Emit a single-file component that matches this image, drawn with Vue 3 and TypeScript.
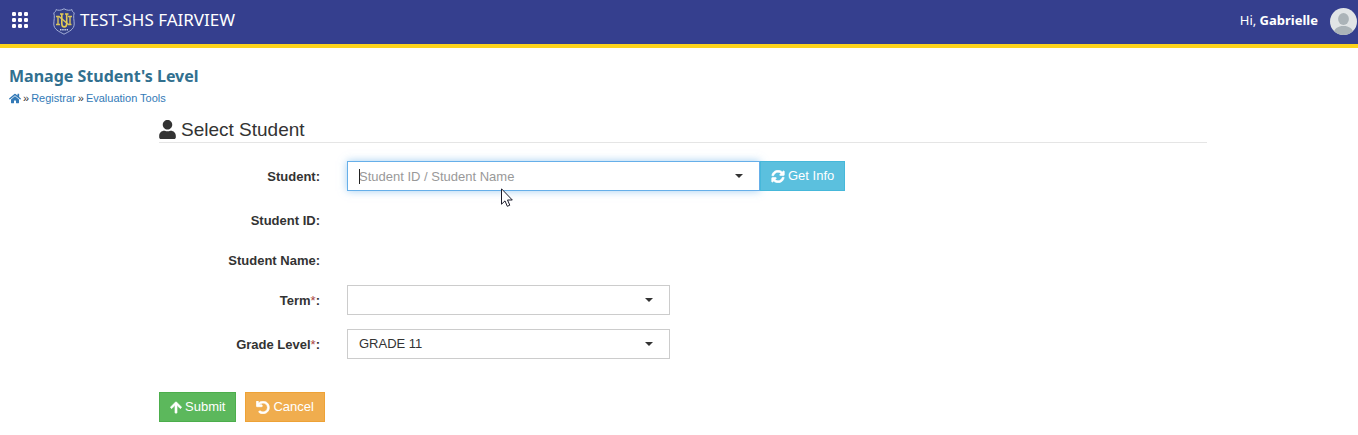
<script setup lang="ts">
import { ref } from 'vue'

const student = ref('')
const term = ref('')
const gradeLevel = ref('11')
const dots = [0, 1, 2, 3, 4, 5, 6, 7, 8]
</script>

<template>
  <div class="page">
    <header class="topbar">
      <button type="button" class="menu" aria-label="Applications">
        <svg width="16" height="16" viewBox="0 0 16 16">
          <rect v-for="d in dots" :key="d" :x="(d % 3) * 6" :y="Math.floor(d / 3) * 6" width="4" height="4" rx="1.2" fill="#fff" />
        </svg>
      </button>
      <a href="#" class="brand">
        <svg class="crest" width="22" height="27" viewBox="0 0 22 27" fill="none">
          <path d="M11 .8C8 2.6 5 2.6 3 1.6C3 3.4 2 4.2 .8 4.8C2 9 .8 12 .8 16C.8 21.5 6 23.500 11 26.200C16 23.500 21.200 21.500 21.200 16C21.200 12 20 9 21.200 4.800C20 4.200 19 3.400 19 1.600C17 2.600 14 2.600 11 .8Z" fill="#333f87" stroke="#a5afd8" />
          <path d="M3 8.500H6L15.500 16.500H18.500M5 8.500V16.500M3 16.500H7M17 8.500V16.500M15 8.500H19" stroke="#d9c35b" stroke-width="1.400" />
          <path d="M7 6H10.500M8.800 6V15.500C8.800 20 13.700 20 13.700 15.500V6M12 6H15.500" stroke="#e3ca55" stroke-width="1.600" />
          <path d="M7 21.800H15" stroke="#c3c9e3" stroke-width="1.600" stroke-dasharray="1.500 .7" />
        </svg>
        <span>TEST-SHS FAIRVIEW</span>
      </a>
      <div class="account">
        <span>Hi, <strong>Gabrielle</strong></span>
        <svg width="27" height="27" viewBox="0 0 27 27" role="img" aria-label="Profile">
          <defs><clipPath id="avatar-clip"><circle cx="13.500" cy="13.500" r="13.500" /></clipPath></defs>
          <g clip-path="url(#avatar-clip)">
            <rect width="27" height="27" fill="#e1e4e6" />
            <ellipse cx="13.500" cy="11" rx="5.400" ry="6" fill="#abb3b8" />
            <path d="M3.500 27C3.500 20.500 8 18 13.500 18S23.500 20.500 23.500 27Z" fill="#abb3b8" />
          </g>
        </svg>
      </div>
    </header>

    <div class="heading">
      <h1>Manage Student's Level</h1>
      <nav class="crumbs" aria-label="Breadcrumb">
        <a href="#" aria-label="Home">
          <svg width="12" height="11" viewBox="0 0 576 512" fill="currentColor"><path d="M280.37 148.26L96 300.11V464a16 16 0 0 0 16 16l112.06-.29a16 16 0 0 0 15.92-16V368a16 16 0 0 1 16-16h64a16 16 0 0 1 16 16v95.64a16 16 0 0 0 16 16.05L464 480a16 16 0 0 0 16-16V300L295.67 148.26a12.19 12.19 0 0 0-15.3 0zM571.6 251.47L488 182.56V44.05a12 12 0 0 0-12-12h-56a12 12 0 0 0-12 12v72.61L318.47 43a48 48 0 0 0-61 0L4.34 251.47a12 12 0 0 0-1.6 16.9l25.5 31A12 12 0 0 0 45.15 301l235.22-193.74a12.19 12.19 0 0 1 15.3 0L530.9 301a12 12 0 0 0 16.9-1.6l25.5-31a12 12 0 0 0-1.7-16.93z" /></svg>
        </a>
        <span>»</span>
        <a href="#">Registrar</a>
        <span>»</span>
        <a href="#">Evaluation Tools</a>
      </nav>
    </div>

    <form class="form" @submit.prevent>
      <h2>
        <svg width="17" height="19" viewBox="0 0 448 512" fill="currentColor"><path d="M224 256c70.7 0 128-57.3 128-128S294.7 0 224 0 96 57.3 96 128s57.3 128 128 128zm89.6 32h-16.7c-22.2 10.2-46.9 16-72.9 16s-50.600-5.800-72.900-16h-16.700C60.200 288 0 348.200 0 422.400V464c0 26.500 21.500 48 48 48h352c26.500 0 48-21.500 48-48v-41.600c0-74.200-60.200-134.400-134.400-134.400z" /></svg>
        <span>Select Student</span>
      </h2>

      <div class="rows">
        <div class="row">
          <label for="student">Student:</label>
          <div class="group">
            <div class="combo">
              <input id="student" v-model="student" type="text" placeholder="Student ID / Student Name" autocomplete="off" />
              <i class="cursor" />
              <i class="caret" />
            </div>
            <button type="button" class="btn info">
              <svg width="14" height="13" viewBox="0 0 512 512" fill="currentColor" stroke="currentColor" stroke-width="24"><path d="M370.72 133.28C339.458 104.008 298.888 87.962 255.848 88c-77.458.068-144.328 53.178-162.791 126.85-1.344 5.363-6.122 9.15-11.651 9.15H24.103c-7.498 0-13.194-6.807-11.807-14.176C33.933 94.924 134.813 8 256 8c66.448 0 126.791 26.136 171.315 68.685L463.03 40.97C478.149 25.851 504 36.559 504 57.941V192c0 13.255-10.745 24-24 24H345.941c-21.382 0-32.09-25.851-16.971-40.971l41.75-41.749zM32 296h134.059c21.382 0 32.09 25.851 16.971 40.971l-41.75 41.75c31.262 29.273 71.835 45.319 114.876 45.28 77.418-.07 144.315-53.144 162.787-126.849 1.344-5.363 6.122-9.15 11.651-9.15h57.304c7.498 0 13.194 6.807 11.807 14.176C478.067 417.076 377.187 504 256 504c-66.448 0-126.791-26.136-171.315-68.685L48.97 471.03C33.851 486.149 8 475.441 8 454.059V320c0-13.255 10.745-24 24-24z" /></svg>
              <span>Get Info</span>
            </button>
            <svg class="pointer" width="12" height="20" viewBox="0 0 12 20"><path d="M.5.8V16.200L4 12.900L6.300 18.300L8.800 17.200L6.500 12H11.300Z" fill="#fff" stroke="#1b1b2a" stroke-width="1" /></svg>
          </div>
        </div>

        <div class="row static">
          <span class="name">Student ID:</span>
        </div>
        <div class="row static">
          <span class="name">Student Name:</span>
        </div>

        <div class="row">
          <label for="term">Term<em>*</em>:</label>
          <div class="select">
            <select id="term" v-model="term">
              <option value=""></option>
            </select>
            <i class="caret" />
          </div>
        </div>
        <div class="row">
          <label for="grade">Grade Level<em>*</em>:</label>
          <div class="select">
            <select id="grade" v-model="gradeLevel">
              <option value="11">GRADE 11</option>
            </select>
            <i class="caret" />
          </div>
        </div>
      </div>

      <div class="actions">
        <button type="submit" class="btn success">
          <svg width="12" height="13" viewBox="0 0 448 512" fill="currentColor" stroke="currentColor" stroke-width="24"><path d="M34.9 289.5l-22.2-22.2c-9.4-9.4-9.4-24.6 0-33.9L207 39c9.4-9.4 24.6-9.4 33.9 0l194.3 194.3c9.4 9.4 9.4 24.6 0 33.9L413 289.4c-9.5 9.5-25 9.3-34.3-.4L264 168.6V456c0 13.3-10.7 24-24 24h-32c-13.300 0-24-10.700-24-24V168.600L69.200 289.100c-9.300 9.800-24.800 10-34.300.4z" /></svg>
          <span>Submit</span>
        </button>
        <button type="button" class="btn warning">
          <svg width="14" height="13" viewBox="0 0 512 512" fill="currentColor" stroke="currentColor" stroke-width="28"><path d="M212.333 224.333H12c-6.627 0-12-5.373-12-12V12C0 5.373 5.373 0 12 0h48c6.627 0 12 5.373 12 12v78.112C117.773 39.279 184.26 7.47 258.175 8.007c136.906.994 246.448 111.623 246.157 248.532C504.041 393.258 393.12 504 256.333 504c-64.089 0-122.496-24.313-166.51-64.215-5.099-4.622-5.334-12.554-.467-17.42l33.967-33.967c4.474-4.474 11.662-4.717 16.401-.525C170.76 415.336 211.58 432 256.333 432c97.268 0 176-78.716 176-176 0-97.267-78.716-176-176-176-58.496 0-110.28 28.476-142.274 72.333h98.274c6.627 0 12 5.373 12 12v48c0 6.627-5.373 12-12 12z" /></svg>
          <span>Cancel</span>
        </button>
      </div>
    </form>
  </div>
</template>

<style>
body {
  background: #fff;
}
</style>

<style scoped>
.page,
.page * {
  box-sizing: border-box;
}
.page {
  font-family: "Liberation Sans", Arial, sans-serif;
  font-size: 13px;
  line-height: 18px;
  color: #333;
}
svg {
  display: block;
  flex: none;
}
.topbar {
  display: flex;
  align-items: center;
  height: 48px;
  padding: 0 1px 1px 12px;
  background: #353f8e;
  border-bottom: 4px solid #fdd31b;
  color: #fff;
  font-family: "Noto Sans", "Open Sans", sans-serif;
}
.menu {
  display: flex;
  margin: 0 25px 4px 0;
  padding: 0;
  border: 0;
  background: none;
}
.brand {
  display: flex;
  align-items: center;
  gap: 5px;
  color: #fff;
  font-size: 17px;
  line-height: 24px;
  text-decoration: none;
}
.brand span {
  padding-bottom: 4px;
}
.account {
  display: flex;
  align-items: center;
  gap: 12px;
  margin-left: auto;
  font-size: 13px;
}
.account span {
  padding-bottom: 3px;
}
.heading {
  padding: 16px 9px 0;
}
h1 {
  margin: 0;
  font-family: "Noto Sans", "Open Sans", sans-serif;
  font-size: 16px;
  line-height: 24px;
  font-weight: 700;
  color: #31708f;
}
.crumbs {
  display: flex;
  align-items: center;
  gap: 2px;
  margin-top: 3px;
  font-size: 11px;
  line-height: 15px;
}
.crumbs a {
  color: #337ab7;
  text-decoration: none;
}
.form {
  margin: 13px 151px 0 159px;
}
h2 {
  display: flex;
  align-items: center;
  gap: 5px;
  margin: 0;
  padding-bottom: 2px;
  border-bottom: 1px solid #e5e5e5;
  font-size: 19px;
  line-height: 21px;
  font-weight: 400;
}
.rows {
  display: grid;
  gap: 14px;
  margin-top: 18px;
}
.row {
  display: grid;
  grid-template-columns: 161px 1fr;
  column-gap: 27px;
  align-items: center;
  height: 30px;
}
.row.static {
  height: 26px;
  padding-top: 4px;
}
label,
.name {
  padding-top: 2px;
  font-weight: 700;
  text-align: right;
  white-space: nowrap;
}
em {
  color: #a94442;
  font-style: normal;
  font-weight: 400;
}
.group {
  position: relative;
  display: flex;
}
.combo,
.select {
  position: relative;
  width: 323px;
}
.combo {
  width: 413px;
}
input,
select {
  display: block;
  width: 100%;
  height: 30px;
  margin: 0;
  padding: 0 40px 0 11px;
  border: 1px solid #ccc;
  border-radius: 0;
  outline: 0;
  appearance: none;
  background: #fff;
  color: #333;
  font: inherit;
}
input {
  border-color: #66afe9;
  box-shadow: 0 0 8px rgba(102, 175, 233, 0.6);
}
input::placeholder {
  color: #999;
  opacity: 1;
}
.caret {
  position: absolute;
  top: 13px;
  right: 17px;
  border-top: 4px solid #333;
  border-right: 4px solid transparent;
  border-left: 4px solid transparent;
  pointer-events: none;
}
.cursor {
  position: absolute;
  top: 8px;
  left: 12px;
  width: 1px;
  height: 15px;
  background: #222;
}
.pointer {
  position: absolute;
  top: 27px;
  left: 154px;
}
.btn {
  position: relative;
  display: flex;
  align-items: center;
  gap: 3px;
  height: 30px;
  padding: 0 10px;
  border: 1px solid;
  border-radius: 0;
  color: #fff;
  font: inherit;
}
.info {
  background: #5bc0de;
  border-color: #46b8da;
}
.success {
  background: #5cb85c;
  border-color: #4cae4c;
}
.warning {
  background: #f0ad4e;
  border-color: #eea236;
}
.actions {
  display: flex;
  gap: 9px;
  margin-top: 33px;
}
</style>
